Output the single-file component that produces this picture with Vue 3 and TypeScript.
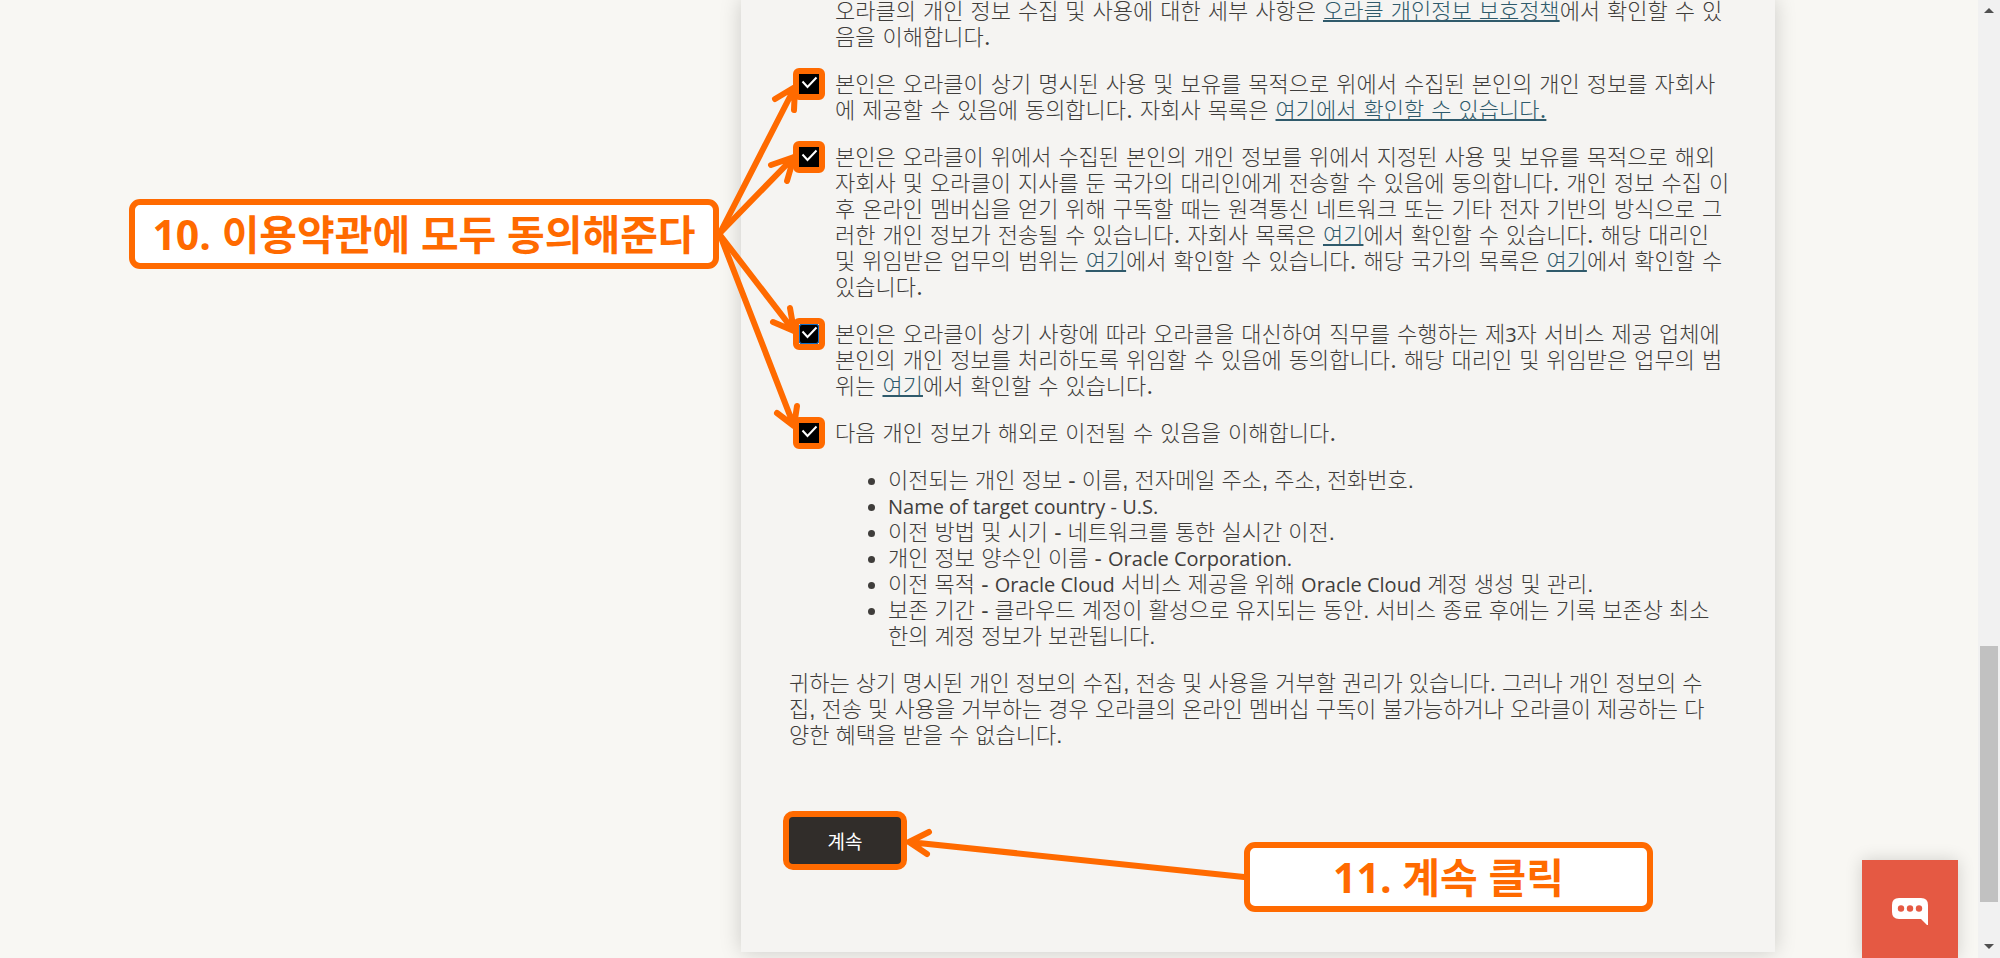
<script setup lang="ts">
import { ref } from 'vue'

type Segment = { text: string; href?: string; latin?: boolean }
type Line = Segment[]

interface Consent {
  id: string
  focused?: boolean
  lines: Line[]
}

const intro: Line[] = [
  [
    { text: '오라클의 개인 정보 수집 및 사용에 대한 세부 사항은 ' },
    { text: '오라클 개인정보 보호정책', href: '#privacy' },
    { text: '에서 확인할 수 있' },
  ],
  [{ text: '음을 이해합니다.' }],
]

const consents: Consent[] = [
  {
    id: 'affiliates',
    lines: [
      [{ text: '본인은 오라클이 상기 명시된 사용 및 보유를 목적으로 위에서 수집된 본인의 개인 정보를 자회사' }],
      [
        { text: '에 제공할 수 있음에 동의합니다. 자회사 목록은 ' },
        { text: '여기에서 확인할 수 있습니다.', href: '#affiliates' },
      ],
    ],
  },
  {
    id: 'overseas',
    lines: [
      [{ text: '본인은 오라클이 위에서 수집된 본인의 개인 정보를 위에서 지정된 사용 및 보유를 목적으로 해외' }],
      [{ text: '자회사 및 오라클이 지사를 둔 국가의 대리인에게 전송할 수 있음에 동의합니다. 개인 정보 수집 이' }],
      [{ text: '후 온라인 멤버십을 얻기 위해 구독할 때는 원격통신 네트워크 또는 기타 전자 기반의 방식으로 그' }],
      [
        { text: '러한 개인 정보가 전송될 수 있습니다. 자회사 목록은 ' },
        { text: '여기', href: '#affiliates' },
        { text: '에서 확인할 수 있습니다. 해당 대리인' },
      ],
      [
        { text: '및 위임받은 업무의 범위는 ' },
        { text: '여기', href: '#agents' },
        { text: '에서 확인할 수 있습니다. 해당 국가의 목록은 ' },
        { text: '여기', href: '#countries' },
        { text: '에서 확인할 수' },
      ],
      [{ text: '있습니다.' }],
    ],
  },
  {
    id: 'processors',
    focused: true,
    lines: [
      [
        { text: '본인은 오라클이 상기 사항에 따라 오라클을 대신하여 직무를 수행하는 제' },
        { text: '3', latin: true },
        { text: '자 서비스 제공 업체에' },
      ],
      [{ text: '본인의 개인 정보를 처리하도록 위임할 수 있음에 동의합니다. 해당 대리인 및 위임받은 업무의 범' }],
      [
        { text: '위는 ' },
        { text: '여기', href: '#agents' },
        { text: '에서 확인할 수 있습니다.' },
      ],
    ],
  },
  {
    id: 'transfer',
    lines: [[{ text: '다음 개인 정보가 해외로 이전될 수 있음을 이해합니다.' }]],
  },
]

const details: Line[][] = [
  [[{ text: '이전되는 개인 정보 - 이름, 전자메일 주소, 주소, 전화번호.' }]],
  [[{ text: 'Name of target country - U.S.', latin: true }]],
  [[{ text: '이전 방법 및 시기 - 네트워크를 통한 실시간 이전.' }]],
  [[{ text: '개인 정보 양수인 이름 - ' }, { text: 'Oracle Corporation.', latin: true }]],
  [
    [
      { text: '이전 목적 - ' },
      { text: 'Oracle Cloud', latin: true },
      { text: ' 서비스 제공을 위해 ' },
      { text: 'Oracle Cloud', latin: true },
      { text: ' 계정 생성 및 관리.' },
    ],
  ],
  [
    [{ text: '보존 기간 - 클라우드 계정이 활성으로 유지되는 동안. 서비스 종료 후에는 기록 보존상 최소' }],
    [{ text: '한의 계정 정보가 보관됩니다.' }],
  ],
]

const closing: Line[] = [
  [{ text: '귀하는 상기 명시된 개인 정보의 수집, 전송 및 사용을 거부할 권리가 있습니다. 그러나 개인 정보의 수' }],
  [{ text: '집, 전송 및 사용을 거부하는 경우 오라클의 온라인 멤버십 구독이 불가능하거나 오라클이 제공하는 다' }],
  [{ text: '양한 혜택을 받을 수 없습니다.' }],
]

const checked = ref<string[]>(consents.map((c) => c.id))

const arrows = [
  'M-21 234L54 88M34 100L54 88L53 111',
  'M-21 234L53 158M30 166L53 158L46 182',
  'M-21 236L53 332M32 323L53 332L49 309',
  'M-21 236L53 427M36 414L53 427L56 407',
  'M503 878L168 843M188 833L168 843L186 855',
]
</script>

<template>
  <div class="window">
    <main class="page">
      <section class="card">
        <p class="indented">
          <template v-for="(line, i) in intro" :key="i">
            <br v-if="i" /><template v-for="(s, j) in line" :key="j"><a v-if="s.href" :href="s.href">{{ s.text }}</a><span v-else>{{ s.text }}</span></template>
          </template>
        </p>

        <div v-for="c in consents" :key="c.id" class="consent">
          <span class="mark">
            <input :id="c.id" v-model="checked" type="checkbox" :value="c.id" :class="{ focused: c.focused }" />
            <svg class="tick" viewBox="0 0 20 20" aria-hidden="true"><path d="M3.5 7.5L8.5 13L17.5 3.5" /></svg>
          </span>
          <label :for="c.id">
            <template v-for="(line, i) in c.lines" :key="i">
              <br v-if="i" /><template v-for="(s, j) in line" :key="j"><a v-if="s.href" :href="s.href">{{ s.text }}</a><span v-else :class="{ latin: s.latin }">{{ s.text }}</span></template>
            </template>
          </label>
        </div>

        <ul>
          <li v-for="(item, k) in details" :key="k">
            <template v-for="(line, i) in item" :key="i">
              <br v-if="i" /><span v-for="(s, j) in line" :key="j" :class="{ latin: s.latin }">{{ s.text }}</span>
            </template>
          </li>
        </ul>

        <p>
          <template v-for="(line, i) in closing" :key="i">
            <br v-if="i" /><span v-for="(s, j) in line" :key="j">{{ s.text }}</span>
          </template>
        </p>

        <div class="actions">
          <button type="button" class="continue">계속</button>
        </div>

        <svg class="arrows" aria-hidden="true">
          <path v-for="d in arrows" :key="d" :d="d" />
        </svg>
        <div class="callout agree">10. 이용약관에 모두 동의해준다</div>
        <div class="callout click">11. 계속 클릭</div>
      </section>
    </main>

    <button type="button" class="chat" aria-label="채팅">
      <svg width="36" height="27" viewBox="0 0 36 27" aria-hidden="true">
        <path d="M7 0H29Q36 0 36 7V27H35L29 21H7Q0 21 0 14V7Q0 0 7 0Z" fill="#fff" />
        <circle cx="9" cy="10.5" r="3.2" />
        <circle cx="18" cy="10.5" r="3.2" />
        <circle cx="27" cy="10.5" r="3.2" />
      </svg>
    </button>

    <div class="scrollbar" aria-hidden="true">
      <svg width="10" height="5" viewBox="0 0 10 5"><path d="M0 5L5 0L10 5Z" /></svg>
      <div class="track"><div class="thumb"></div></div>
      <svg width="10" height="5" viewBox="0 0 10 5"><path d="M0 0L5 5L10 0Z" /></svg>
    </div>
  </div>
</template>

<style>
body {
  margin: 0;
  background: #f8f7f3;
}
</style>

<style scoped>
.window {
  display: flex;
  min-height: 100vh;
  overflow: hidden;
  background: #f8f7f3;
  color: #3f3d3b;
  font-family: "Liberation Sans", "Noto Sans CJK KR", sans-serif;
  font-size: 22px;
  font-weight: 300;
  line-height: 26px;
}

.page {
  flex: 1;
  display: grid;
  grid-template-columns: minmax(0, 741fr) minmax(0, 1034fr) minmax(0, 203fr);
  align-items: start;
}

.card {
  grid-column: 2;
  position: relative;
  box-sizing: border-box;
  margin-top: -1px;
  padding: 0 48px 82px;
  background: #f5f4f2;
  box-shadow: 0 0 20px rgba(0, 0, 0, 0.18);
}

p {
  margin: 0 0 21px;
  white-space: nowrap;
}

.indented,
.consent {
  font-family: "DejaVu Serif", "Noto Sans CJK KR", sans-serif;
}

.indented {
  padding-left: 46px;
}

.consent {
  display: flex;
  align-items: flex-start;
  gap: 10px;
  margin: 0 0 21px;
  padding-left: 4px;
}

label {
  white-space: nowrap;
}

.mark {
  position: relative;
  z-index: 2;
  flex: none;
  display: block;
  width: 20px;
  height: 20px;
  margin: -4px 0 -2px;
  border: 6px solid #ff6a00;
  border-radius: 6px;
  background: #fff;
}

input {
  appearance: none;
  display: block;
  width: 20px;
  height: 20px;
  margin: 0;
  background: #fff;
}

input:checked {
  background: #000;
}

input.focused {
  border-radius: 3px;
  box-shadow: inset 0 0 0 1px #0f6fc6;
}

.tick {
  position: absolute;
  inset: 0;
  width: 20px;
  height: 20px;
  pointer-events: none;
}

.tick path {
  fill: none;
  stroke: #fff;
  stroke-width: 2;
}

a {
  color: #2f5a6b;
  text-decoration: underline;
  text-decoration-thickness: 2px;
  text-underline-offset: 1px;
  text-decoration-skip-ink: none;
}

.latin {
  font-family: "Open Sans", "Noto Sans", sans-serif;
  font-size: 20px;
  font-weight: 400;
  line-height: 1;
}

ul {
  margin: 0 0 21px;
  padding-left: 99px;
  white-space: nowrap;
}

.actions {
  display: flex;
  margin: 62px 0 0 -6px;
}

.continue {
  position: relative;
  z-index: 2;
  box-sizing: border-box;
  width: 124px;
  height: 59px;
  padding: 0;
  border: 6px solid #ff6a00;
  border-radius: 10px;
  background: #312d2a;
  color: #fff;
  font-family: "Noto Sans CJK KR", sans-serif;
  font-size: 19px;
}

.arrows {
  position: absolute;
  inset: 0;
  z-index: 1;
  width: 100%;
  height: 100%;
  overflow: visible;
  pointer-events: none;
}

.arrows path {
  fill: none;
  stroke: #ff6a00;
  stroke-width: 6;
  stroke-linecap: round;
  stroke-linejoin: round;
}

.callout {
  position: absolute;
  z-index: 2;
  box-sizing: border-box;
  display: flex;
  align-items: center;
  justify-content: center;
  height: 70px;
  border: 6px solid #ff6a00;
  border-radius: 11px;
  background: #fff;
  color: #ff6a00;
  font-family: "Open Sans", "Noto Sans CJK KR", sans-serif;
  font-size: 41px;
  font-weight: 700;
  line-height: 50px;
  white-space: nowrap;
}

.agree {
  top: 200px;
  right: calc(100% + 22px);
  width: 590px;
}

.click {
  top: 843px;
  left: 503px;
  width: 409px;
}

.chat {
  position: fixed;
  right: 42px;
  bottom: 0;
  display: flex;
  justify-content: center;
  width: 96px;
  height: 98px;
  padding: 38px 0 0;
  border: 0;
  background: #e55943;
  box-shadow: 0 0 16px rgba(0, 0, 0, 0.16);
}

.chat circle {
  fill: #e55943;
}

.scrollbar {
  display: flex;
  flex-direction: column;
  align-items: center;
  box-sizing: border-box;
  width: 22px;
  padding: 8px 0 9px;
  background: #f1f1f1;
}

.scrollbar path {
  fill: #505050;
}

.track {
  flex: 1;
  display: flex;
  flex-direction: column;
  justify-content: flex-end;
  width: 18px;
  margin: 8px 0;
}

.thumb {
  height: 28%;
  margin-bottom: 34px;
  background: #c1c1c1;
}
</style>
